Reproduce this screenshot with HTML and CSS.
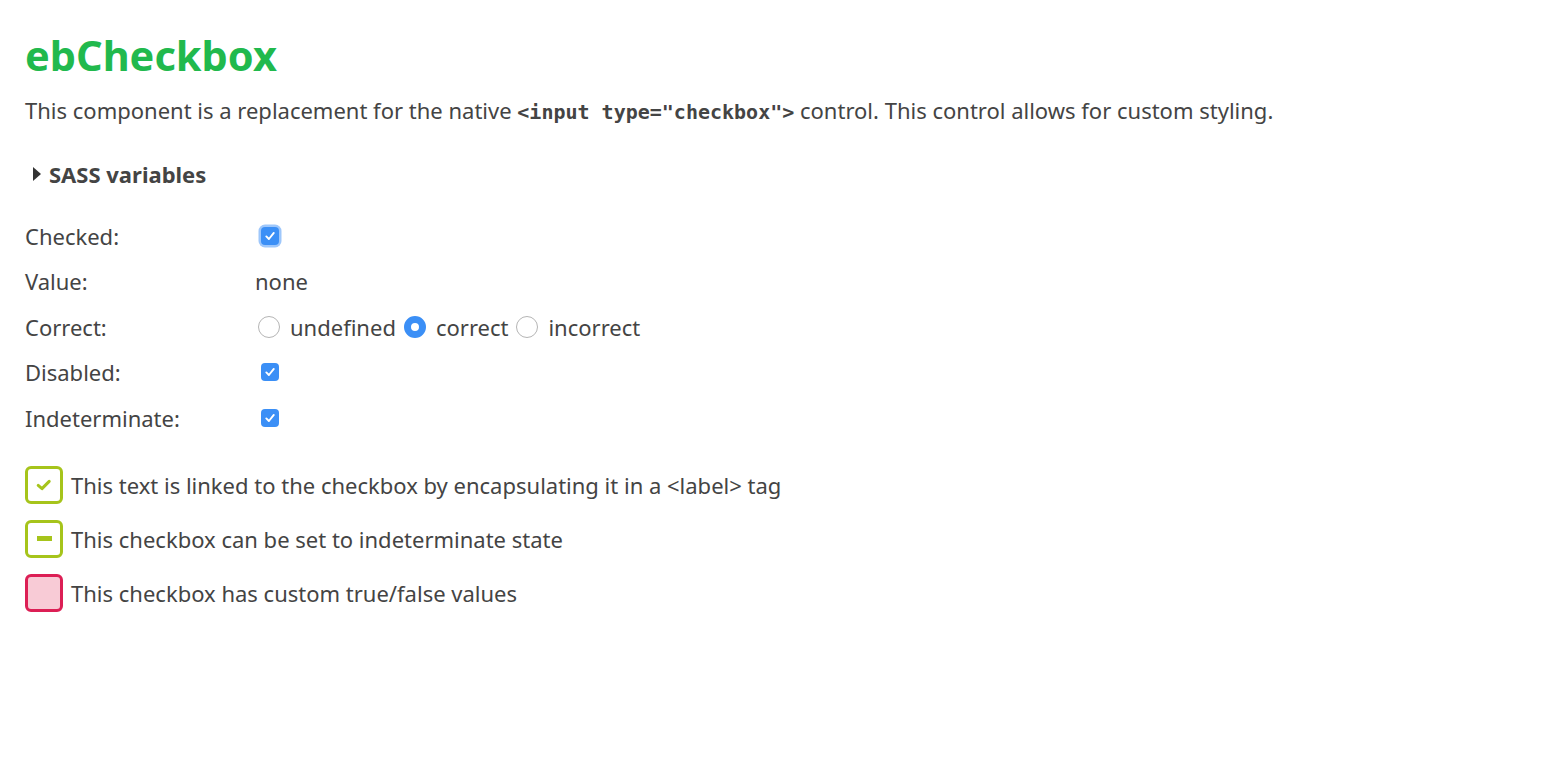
FILE: index.html
```html
<!DOCTYPE html>
<html>
<head>
<meta charset="utf-8">
<link rel="stylesheet" href="styles.css">
</head>
<body>
<main class="page">
  <h1 class="title">ebCheckbox</h1>
  <p class="intro">This component is a replacement for the native <code class="code">&lt;input type="checkbox"&gt;</code> control. This control allows for custom styling.</p>
  <div class="summary"><span class="caret"></span>SASS variables</div>

  <div class="props">
    <div class="prop">
      <span class="prop-label">Checked:</span>
      <span class="prop-value"><span class="native-cb focus"><svg viewBox="0 0 12 12" width="12" height="12"><path d="M2.3 6.4 L4.9 9 L9.8 2.9" fill="none" stroke="#fff" stroke-width="1.9" stroke-linecap="round" stroke-linejoin="round"/></svg></span></span>
    </div>
    <div class="prop">
      <span class="prop-label">Value:</span>
      <span class="prop-value text">none</span>
    </div>
    <div class="prop">
      <span class="prop-label">Correct:</span>
      <span class="prop-value radios">
        <span class="radio"></span><span class="radio-text">undefined</span>
        <span class="radio on"></span><span class="radio-text">correct</span>
        <span class="radio"></span><span class="radio-text">incorrect</span>
      </span>
    </div>
    <div class="prop">
      <span class="prop-label">Disabled:</span>
      <span class="prop-value"><span class="native-cb"><svg viewBox="0 0 12 12" width="12" height="12"><path d="M2.3 6.4 L4.9 9 L9.8 2.9" fill="none" stroke="#fff" stroke-width="1.9" stroke-linecap="round" stroke-linejoin="round"/></svg></span></span>
    </div>
    <div class="prop">
      <span class="prop-label">Indeterminate:</span>
      <span class="prop-value"><span class="native-cb"><svg viewBox="0 0 12 12" width="12" height="12"><path d="M2.3 6.4 L4.9 9 L9.8 2.9" fill="none" stroke="#fff" stroke-width="1.9" stroke-linecap="round" stroke-linejoin="round"/></svg></span></span>
    </div>
  </div>

  <div class="examples">
    <label class="eb-row">
      <span class="eb-box green"><svg viewBox="0 0 18 18" width="18" height="18"><path d="M3.2 9.4 L7 12.6 L14.2 5.4" fill="none" stroke="#a6c41b" stroke-width="3" stroke-linecap="round" stroke-linejoin="round"/></svg></span>
      <span class="eb-text">This text is linked to the checkbox by encapsulating it in a &lt;label&gt; tag</span>
    </label>
    <label class="eb-row">
      <span class="eb-box green"><span class="dash"></span></span>
      <span class="eb-text">This checkbox can be set to indeterminate state</span>
    </label>
    <label class="eb-row">
      <span class="eb-box red"></span>
      <span class="eb-text">This checkbox has custom true/false values</span>
    </label>
  </div>
</main>
</body>
</html>
```

FILE: styles.css
```css
html, body {
  margin: 0;
  padding: 0;
  background: #fff;
}
body {
  font-family: "Noto Sans", "Liberation Sans", sans-serif;
  color: #444;
}
.page {
  padding: 26px 25px;
}
.title {
  margin: 0;
  font-size: 41.5px;
  line-height: 58px;
  font-weight: 700;
  color: #21b94d;
}
.intro {
  margin: 11px 0 0;
  font-size: 22px;
  line-height: 30px;
}
.code {
  font-family: "DejaVu Sans Mono", monospace;
  font-weight: 700;
  font-size: 20px;
}
.summary {
  margin-top: 33px;
  display: flex;
  align-items: center;
  font-size: 22px;
  font-weight: 700;
  line-height: 28px;
  padding-left: 8px;
}
.caret {
  width: 0;
  height: 0;
  border-top: 7px solid transparent;
  border-bottom: 7px solid transparent;
  border-left: 8px solid #333;
  margin-right: 8px;
}
.props {
  margin-top: 25px;
  display: flex;
  flex-direction: column;
}
.prop {
  display: flex;
  align-items: center;
  height: 45.5px;
  font-size: 22px;
}
.prop-label {
  width: 230px;
}
.prop-value {
  display: flex;
  align-items: center;
}
.native-cb {
  width: 18px;
  height: 18px;
  border-radius: 4px;
  background: #3b8ff6;
  display: flex;
  align-items: center;
  justify-content: center;
  margin-left: 6px;
}
.native-cb.focus {
  box-shadow: 0 0 0 2.5px #9ec7fb;
}
.radio {
  width: 22px;
  height: 22px;
  border-radius: 50%;
  box-sizing: border-box;
  border: 1px solid #b5b5b5;
  background: #fff;
  margin-left: 3px;
  margin-right: 10px;
}
.radio.on {
  border: 7.5px solid #3b8ff6;
}
.radio-text + .radio {
  margin-left: 8px;
}
.examples {
  margin-top: 25px;
  display: flex;
  flex-direction: column;
  gap: 16px;
}
.eb-row {
  display: flex;
  align-items: center;
  gap: 8px;
  font-size: 22px;
}
.eb-box {
  width: 38px;
  height: 38px;
  box-sizing: border-box;
  border-radius: 6px;
  border: 3px solid;
  display: flex;
  align-items: center;
  justify-content: center;
}
.eb-box.green {
  border-color: #a6c41b;
}
.eb-box.red {
  border-color: #dc1f55;
  background: #f8cbd6;
}
.dash {
  width: 15px;
  height: 5px;
  background: #a6c41b;
}
```
